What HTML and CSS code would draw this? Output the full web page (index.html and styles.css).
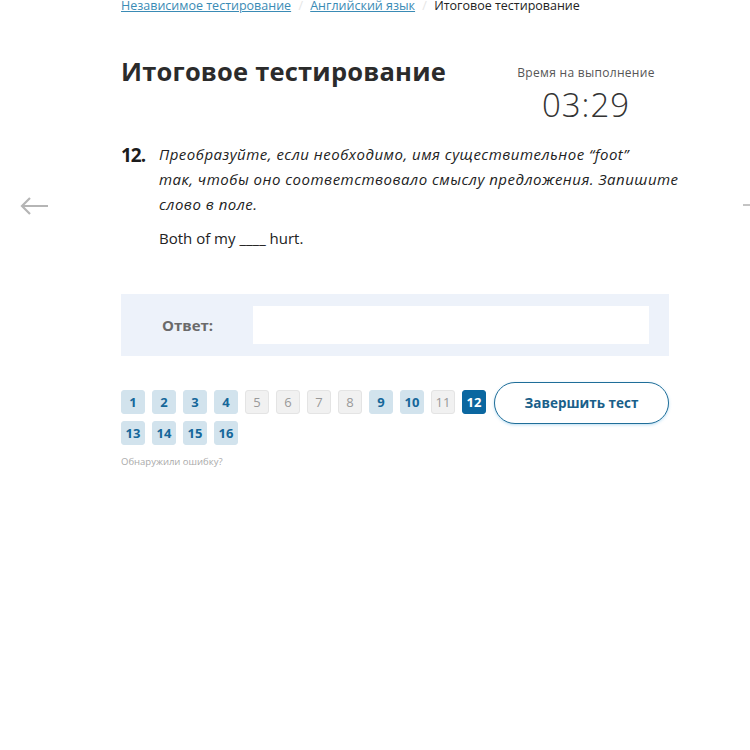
FILE: index.html
```html
<!DOCTYPE html>
<html lang="ru">
<head>
  <meta charset="UTF-8">
  <title>Итоговое тестирование</title>
  <link rel="stylesheet" href="styles.css">
</head>
<body>
  <div class="page">
    <a class="nav-arrow prev" href="#">
      <svg width="30" height="20" viewBox="0 0 30 20"><path d="M29 10H3M11 2L3 10l8 8" fill="none" stroke="#b5b5b5" stroke-width="2.2"/></svg>
    </a>
    <a class="nav-arrow next" href="#"></a>

    <div class="content">
      <div class="breadcrumbs">
        <a href="#">Независимое тестирование</a>
        <span class="sep">/</span>
        <a href="#">Английский язык</a>
        <span class="sep">/</span>
        <span>Итоговое тестирование</span>
      </div>

      <div class="header">
        <h1>Итоговое тестирование</h1>
        <div class="timer">
          <div class="timer-label">Время на выполнение</div>
          <div class="timer-value">03:29</div>
        </div>
      </div>

      <div class="question">
        <div class="q-num">12.</div>
        <div class="q-body">
          <p class="q-text">Преобразуйте, если необходимо, имя существительное “foot” так,&nbsp;чтобы оно соответствовало смыслу предложения. Запишите слово в поле.</p>
          <p class="q-sentence">Both of my ____ hurt.</p>
        </div>
      </div>

      <div class="answer">
        <label for="answer">Ответ:</label>
        <input id="answer" type="text">
      </div>

      <div class="footer">
        <div class="pages">
          <a class="done" href="#">1</a>
          <a class="done" href="#">2</a>
          <a class="done" href="#">3</a>
          <a class="done" href="#">4</a>
          <a href="#">5</a>
          <a href="#">6</a>
          <a href="#">7</a>
          <a href="#">8</a>
          <a class="done" href="#">9</a>
          <a class="done" href="#">10</a>
          <a href="#">11</a>
          <a class="current" href="#">12</a>
          <a class="done" href="#">13</a>
          <a class="done" href="#">14</a>
          <a class="done" href="#">15</a>
          <a class="done" href="#">16</a>
        </div>
        <button class="finish">Завершить тест</button>
      </div>

      <a class="report" href="#">Обнаружили ошибку?</a>
    </div>
  </div>
</body>
</html>
```

FILE: styles.css
```css
body { margin: 0; background: #fff; color: #222; font-family: "Open Sans", "Noto Sans", sans-serif; }
.page { position: relative; padding-top: 1px; }
.content { width: 548px; margin-left: 121px; margin-top: -5px; }

.nav-arrow.prev { position: absolute; left: 19px; top: 196px; }
.nav-arrow.next { position: absolute; left: 743px; top: 204px; width: 12px; height: 2px; background: #c4c4c4; }

.breadcrumbs { font-size: 12.5px; line-height: 20px; color: #222; }
.breadcrumbs a { color: #3a8bb5; text-decoration: underline; }
.breadcrumbs .sep { color: #e6e6e6; margin: 0 4px; }

.header { display: flex; justify-content: space-between; margin-top: 38px; }
h1 { margin: 0; font-size: 25.5px; font-weight: 700; color: #2b2b2b; letter-spacing: 0.2px; }
.timer { text-align: center; width: 152px; margin-right: 7px; }
.timer-label { font-size: 12px; color: #555; line-height: 20px; margin-top: 9px; letter-spacing: 0.3px; }
.timer-value { font-size: 33px; font-weight: 300; color: #333; line-height: 40px; margin-top: 2px; letter-spacing: 1px; }

.question { display: flex; margin-top: 17px; }
.q-num { width: 38px; font-size: 19px; font-weight: 700; letter-spacing: -1px; color: #1c1c1c; line-height: 26px; }
.q-body { flex: 1; margin-right: -12px; }
.q-text { margin: 0; font-size: 15px; font-style: italic; line-height: 25px; color: #222; letter-spacing: 0.5px; }
.q-sentence { margin: 9px 0 0; font-size: 15px; line-height: 25px; color: #222; }

.answer { display: flex; align-items: center; background: #edf2fa; margin-top: 43px; padding: 12px 20px 12px 41px; }
.answer label { width: 91px; font-size: 15px; font-weight: 700; color: #6a6a6a; }
.answer input { flex: 1; height: 38px; border: none; box-sizing: border-box; background: #fff; }

.footer { display: flex; align-items: flex-start; margin-top: 26px; }
.pages { display: flex; flex-wrap: wrap; gap: 7px; width: 368px; padding-top: 8px; }
.pages a { width: 24px; height: 24px; box-sizing: border-box; border-radius: 3px; display: flex; align-items: center; justify-content: center; font-size: 13px; text-decoration: none; color: #999; background: #f1f1f1; border: 1px solid #e4e4e4; }
.pages a.done { background: #d2e3ed; border-color: #d2e3ed; color: #15679a; font-weight: 700; }
.pages a.current { background: #0b67a0; border-color: #0b67a0; color: #fff; font-weight: 700; }
.finish { margin-left: auto; width: 175px; height: 42px; border-radius: 21px; border: 1px solid #1f6e99; background: #fff; color: #1a5f8a; font-family: inherit; font-size: 13.5px; font-weight: 700; box-shadow: 0 1px 3px rgba(60, 160, 220, 0.35); cursor: pointer; }

.report { display: block; margin-top: 10px; font-size: 9.5px; color: #aaa; text-decoration: none; }
```
